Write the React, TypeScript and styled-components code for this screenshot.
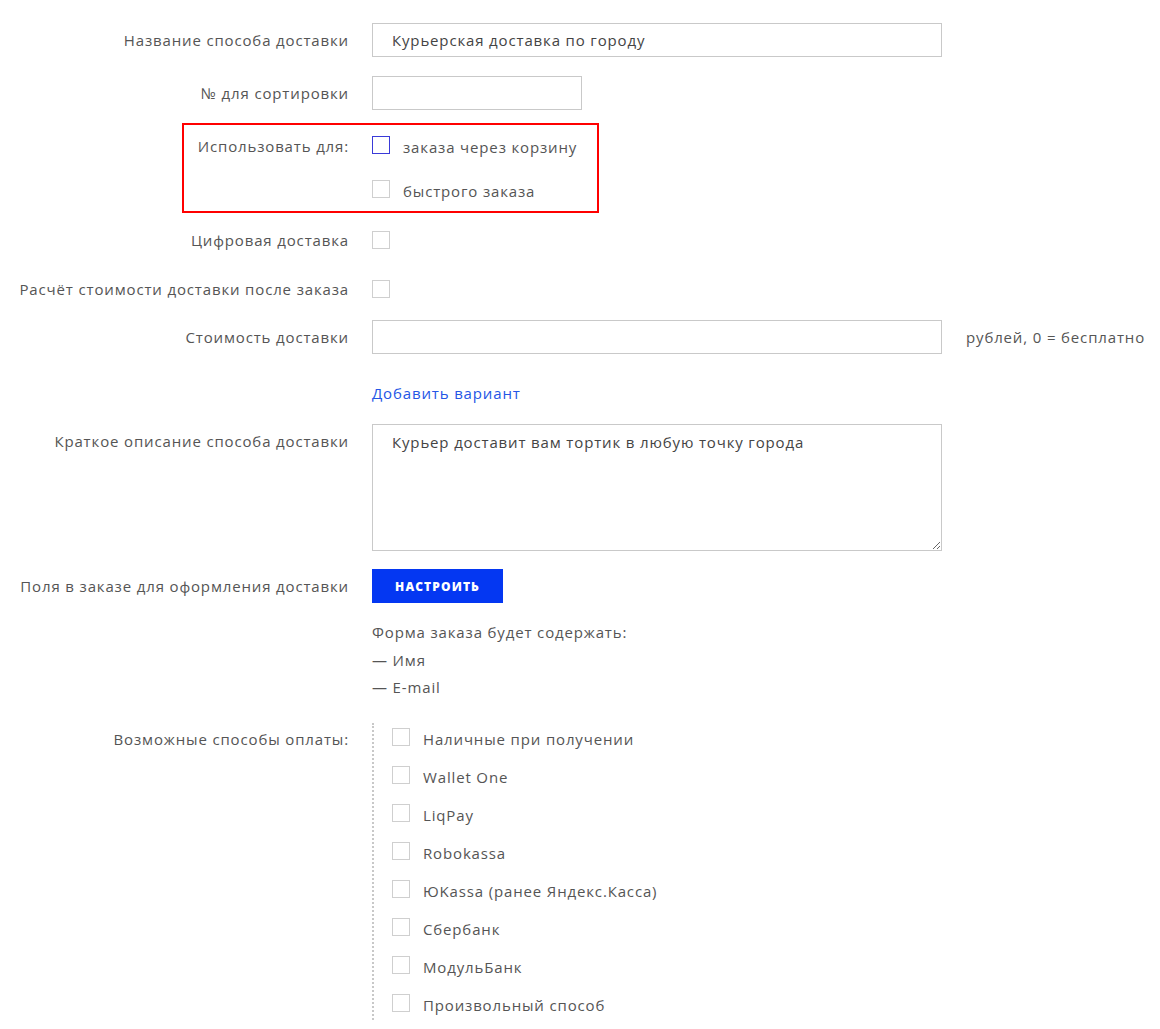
import React from "react";
import styled, { createGlobalStyle } from "styled-components";

const Global = createGlobalStyle`
  html, body { margin: 0; padding: 0; background: #fff; }
  body { font-family: "Open Sans", "Noto Sans", sans-serif; font-size: 15px; letter-spacing: 0.85px; color: #555; }
  *, *::before, *::after { box-sizing: border-box; }
`;

const Page = styled.div`
  width: 1160px;
  padding-top: 23px;
  padding-bottom: 10px;
  display: flex;
  flex-direction: column;
`;

const Row = styled.div<{ $mt?: number; $align?: string; $highlight?: boolean }>`
  position: relative;
  display: flex;
  gap: 23px;
  align-items: ${(p) => p.$align || "center"};
  margin-top: ${(p) => p.$mt || 0}px;
  ${(p) =>
    p.$highlight &&
    `
    &::after {
      content: "";
      position: absolute;
      left: 182px;
      top: -13px;
      width: 417px;
      bottom: -15px;
      border: 2.5px solid #ff0000;
      pointer-events: none;
    }
  `}
`;

const Label = styled.div<{ $mt?: number; $lh?: number }>`
  width: 349px;
  flex: none;
  text-align: right;
  color: #555;
  font-size: 15px;
  line-height: ${(p) => p.$lh || 18}px;
  margin-top: ${(p) => p.$mt || 0}px;
  white-space: nowrap;
`;

const TextInput = styled.input<{ $w: number }>`
  width: ${(p) => p.$w}px;
  height: 34px;
  border: 1px solid #c9c9c9;
  padding: 0 19px;
  font-family: inherit;
  font-size: 15px;
  letter-spacing: 0.85px;
  color: #444;
  outline: none;
  background: #fff;
`;

const TextArea = styled.textarea`
  width: 570px;
  height: 127px;
  border: 1px solid #c9c9c9;
  padding: 8px 19px;
  font-family: inherit;
  font-size: 15px;
  letter-spacing: 0.85px;
  line-height: 18px;
  color: #444;
  outline: none;
  resize: both;
  display: block;
`;

const Suffix = styled.span`
  margin-left: 1px;
  color: #555;
  font-size: 15px;
  white-space: nowrap;
`;

const Box = styled.span<{ $active?: boolean }>`
  width: 18px;
  height: 18px;
  flex: none;
  border: 1px solid ${(p) => (p.$active ? "#3a3ad8" : "#cfcfcf")};
  background: #fff;
  display: inline-block;
`;

const Option = styled.label`
  display: flex;
  align-items: center;
  gap: 13px;
  height: 18px;
  color: #555;
  font-size: 15px;
  white-space: nowrap;
  cursor: pointer;
`;

const OptionText = styled.span`
  position: relative;
  top: 2px;
`;

const Options = styled.div<{ $gap: number }>`
  display: flex;
  flex-direction: column;
  gap: ${(p) => p.$gap}px;
`;

const Link = styled.a`
  color: #2456e6;
  text-decoration: none;
  font-size: 15px;
  line-height: 18px;
  cursor: pointer;
`;

const Button = styled.button`
  width: 131px;
  height: 34px;
  background: #0437f2;
  border: none;
  color: #fff;
  font-family: "Open Sans", sans-serif;
  font-weight: 800;
  font-size: 12px;
  letter-spacing: 1.1px;
  text-transform: uppercase;
  cursor: pointer;
`;

const Column = styled.div`
  display: flex;
  flex-direction: column;
  align-items: flex-start;
`;

const Info = styled.div`
  margin-top: 16px;
  line-height: 27.5px;
  color: #555;
  font-size: 15px;
`;

const PayList = styled.div`
  border-left: 2px dotted #c8c8c8;
  padding: 5px 0 8px 18px;
  display: flex;
  flex-direction: column;
  gap: 20px;
`;

const payments = [
  "Наличные при получении",
  "Wallet One",
  "LiqPay",
  "Robokassa",
  "ЮKassa (ранее Яндекс.Касса)",
  "Сбербанк",
  "МодульБанк",
  "Произвольный способ",
];

export default function App() {
  return (
    <>
      <Global />
      <Page>
        <Row>
          <Label>Название способа доставки</Label>
          <TextInput $w={570} defaultValue="Курьерская доставка по городу" />
        </Row>
        <Row $mt={19}>
          <Label>№ для сортировки</Label>
          <TextInput $w={210} />
        </Row>
        <Row $mt={26} $align="flex-start" $highlight>
          <Label $mt={1}>Использовать для:</Label>
          <Options $gap={26}>
            <Option>
              <Box $active />
              <OptionText>заказа через корзину</OptionText>
            </Option>
            <Option>
              <Box />
              <OptionText>быстрого заказа</OptionText>
            </Option>
          </Options>
        </Row>
        <Row $mt={33}>
          <Label>Цифровая доставка</Label>
          <Box />
        </Row>
        <Row $mt={31}>
          <Label>Расчёт стоимости доставки после заказа</Label>
          <Box />
        </Row>
        <Row $mt={22}>
          <Label>Стоимость доставки</Label>
          <TextInput $w={570} />
          <Suffix>рублей, 0 = бесплатно</Suffix>
        </Row>
        <Row $mt={30}>
          <Label />
          <Link>Добавить вариант</Link>
        </Row>
        <Row $mt={22} $align="flex-start">
          <Label $mt={8}>Краткое описание способа доставки</Label>
          <TextArea defaultValue="Курьер доставит вам тортик в любую точку города" />
        </Row>
        <Row $mt={18} $align="flex-start">
          <Label $lh={34}>Поля в заказе для оформления доставки</Label>
          <Column>
            <Button>Настроить</Button>
            <Info>
              Форма заказа будет содержать:
              <br />— Имя
              <br />— E-mail
            </Info>
          </Column>
        </Row>
        <Row $mt={21} $align="flex-start">
          <Label $mt={7}>Возможные способы оплаты:</Label>
          <PayList>
            {payments.map((p) => (
              <Option key={p}>
                <Box />
                <OptionText>{p}</OptionText>
              </Option>
            ))}
          </PayList>
        </Row>
      </Page>
    </>
  );
}
